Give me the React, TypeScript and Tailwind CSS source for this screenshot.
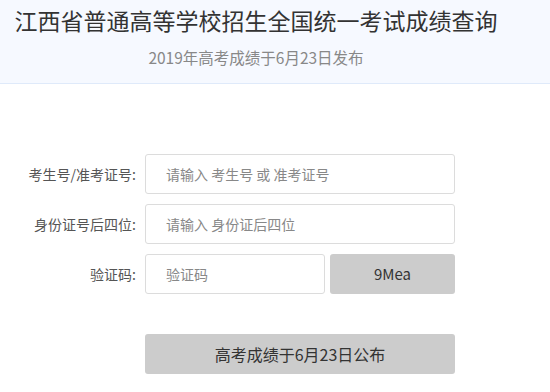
import React from 'react';

const font = { fontFamily: '"Noto Sans CJK SC", "Noto Sans", sans-serif' };

const Row: React.FC<{ label: string; children: React.ReactNode }> = ({ label, children }) => (
  <div className="flex items-center h-[40px]">
    <label className="w-[137px] pr-[1px] text-right text-[14px] text-[#555]">{label}</label>
    <div className="ml-[8px] flex gap-[5px]">{children}</div>
  </div>
);

const App: React.FC = () => {
  return (
    <div className="w-[550px] h-[392px] bg-white overflow-hidden" style={font}>
      {/* header */}
      <header className="h-[84px] bg-[#f6f9ff] border-b border-[#dfeafa]">
        <div className="w-[512px] text-center">
          <h1 className="pt-[5px] text-[23px] leading-[30px] text-[#333] font-normal">
            江西省普通高等学校招生全国统一考试成绩查询
          </h1>
          <p className="mt-[12px] text-[15.5px] leading-[20px] text-[#888]">2019年高考成绩于6月23日发布</p>
        </div>
      </header>

      {/* form */}
      <form className="pt-[70px] flex flex-col gap-[10px]">
        <Row label="考生号/准考证号:">
          <input
            className="w-[310px] h-[40px] rounded-[3px] border border-[#dcdcdc] px-[20px] text-[14px] text-[#333] placeholder:text-[#888] outline-none"
            placeholder="请输入 考生号 或 准考证号"
          />
        </Row>
        <Row label="身份证号后四位:">
          <input
            className="w-[310px] h-[40px] rounded-[3px] border border-[#dcdcdc] px-[20px] text-[14px] text-[#333] placeholder:text-[#888] outline-none"
            placeholder="请输入 身份证后四位"
          />
        </Row>
        <Row label="验证码:">
          <input
            className="w-[180px] h-[40px] rounded-[3px] border border-[#dcdcdc] px-[20px] text-[14px] text-[#333] placeholder:text-[#888] outline-none"
            placeholder="验证码"
          />
          <button
            type="button"
            className="w-[125px] h-[40px] rounded-[3px] bg-[#cccccc] text-[15px] text-[#333]"
          >
            9Mea
          </button>
        </Row>

        <div className="mt-[30px] pl-[145px]">
          <button
            type="button"
            className="w-[310px] h-[40px] rounded-[3px] bg-[#cccccc] text-[16px] text-[#333]"
          >
            高考成绩于6月23日公布
          </button>
        </div>
      </form>
    </div>
  );
};

export default App;
